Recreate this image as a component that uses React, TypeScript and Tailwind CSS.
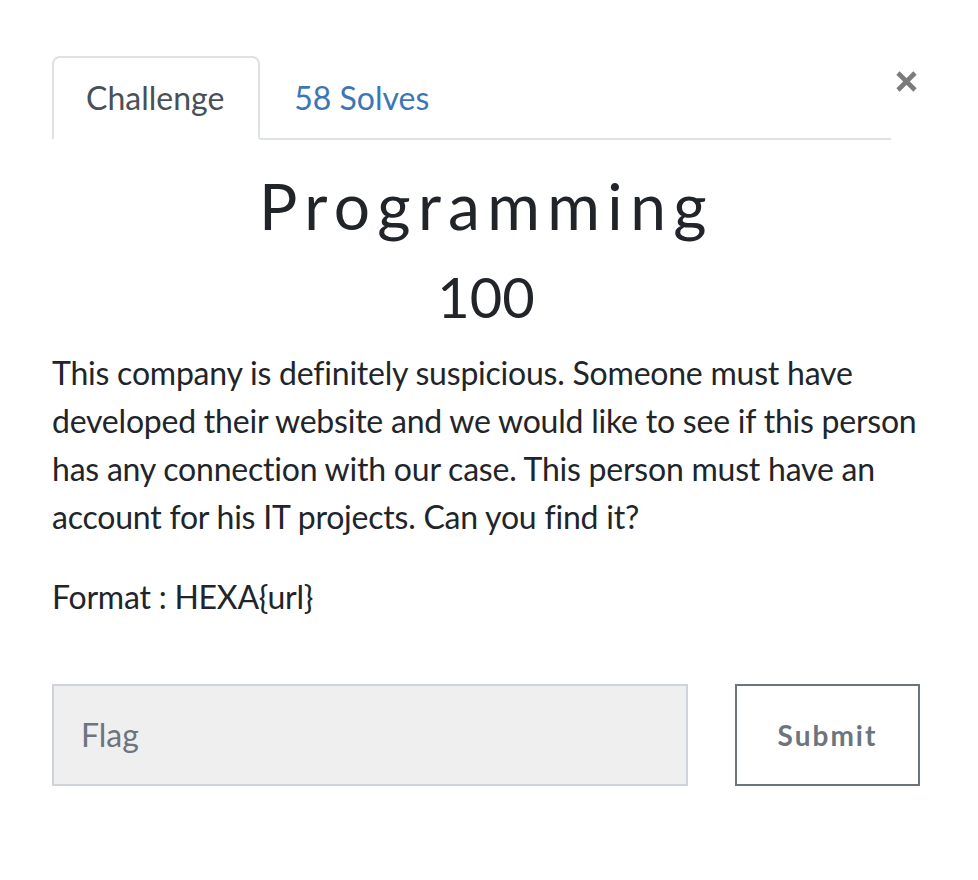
export default function App() {
  return (
    <div className="w-[978px] h-[880px] bg-white pl-[52px] pr-[58px] pt-[56px] font-['Lato','Liberation_Sans',sans-serif] text-[#212529]">
      <div className="flex items-start">
        <div className="flex w-[839px] border-b-2 border-[#dee2e6]">
          <div className="-mb-[2px] rounded-t-lg border-2 border-[#dee2e6] border-b-white bg-white pl-8 pr-[34px] py-4 text-[32px] leading-[48px] text-[#495057]">
            Challenge
          </div>
          <div className="-mb-[2px] border-2 border-transparent px-8 py-4 text-[32px] leading-[48px] text-[#3d76b6]">
            58 Solves
          </div>
        </div>
        <button className="flex flex-1 justify-end pr-[3px] pt-[15px]">
          <svg width="21" height="21" viewBox="0 0 21 21">
            <path d="M2 2 L19 19 M19 2 L2 19" stroke="#7b7b7b" strokeWidth="4.6" />
          </svg>
        </button>
      </div>

      <h2 className="mt-[28px] pl-[1px] text-center text-[64px] leading-[1.2] tracking-[7.4px]">
        Programming
      </h2>
      <h3 className="mt-[18px] text-center text-[56px] leading-[1.2]">100</h3>

      <p className="mt-[19px] text-[32px] leading-[48px] tracking-[-0.22px]">
        This company is definitely suspicious. Someone must have developed their website and we would like to see if this person has any connection with our case. This person must have an account for his IT projects. Can you find it?
      </p>
      <p className="mt-[32px] text-[32px] leading-[48px] tracking-[-0.22px]">Format : HEXA{"{url}"}</p>

      <form className="mt-[63px] flex gap-[47px]" onSubmit={(e) => e.preventDefault()}>
        <input
          placeholder="Flag"
          className="h-[102px] w-[636px] border-2 border-[#ced4da] bg-[#efefef] px-[27px] text-[32px] text-[#495057] placeholder:text-[#6c757d] outline-none"
        />
        <button
          type="submit"
          className="h-[102px] w-[185px] border-2 border-[#6c757d] bg-white text-[28px] font-bold tracking-[2px] text-[#6c757d]"
        >
          Submit
        </button>
      </form>
    </div>
  );
}
